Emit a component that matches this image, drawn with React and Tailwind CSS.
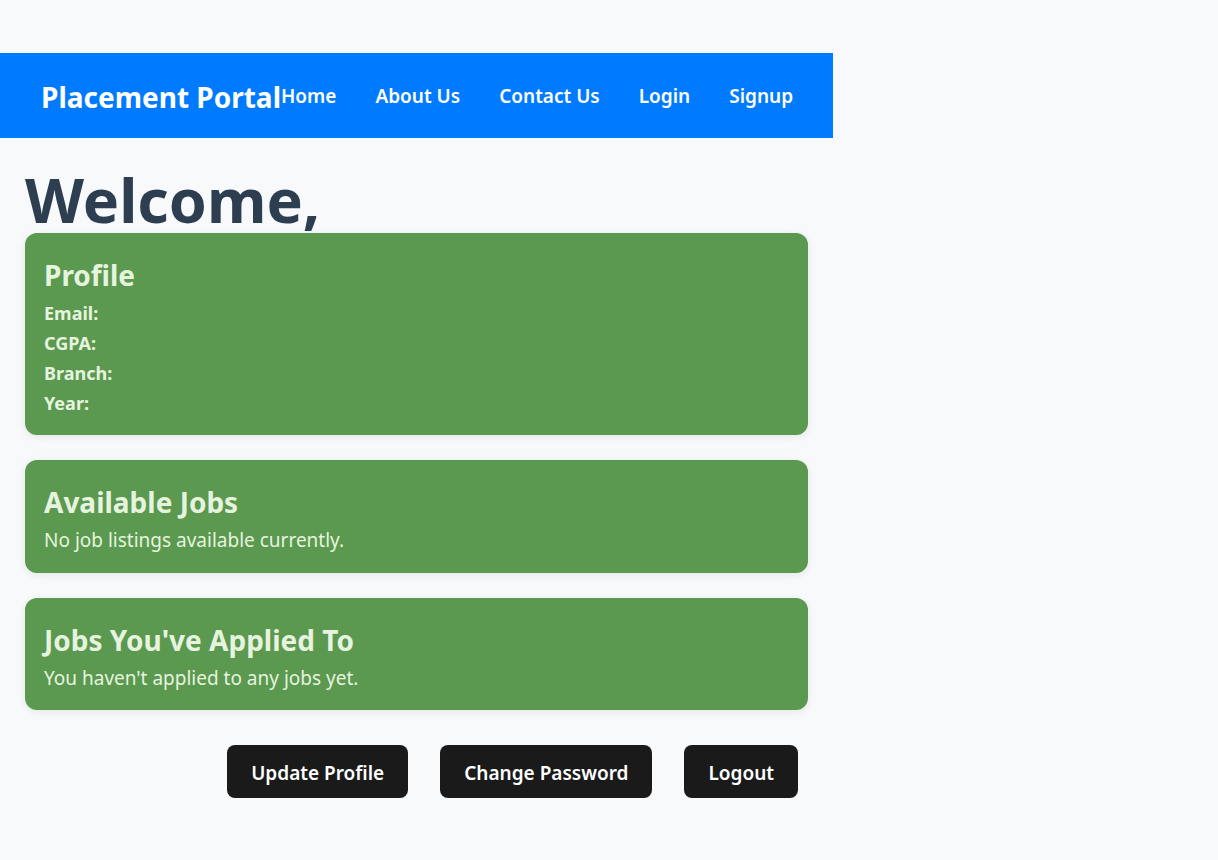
import React from 'react';

const Card = ({ title, children }) => (
  <div className="rounded-xl bg-[#5b9850] px-[19px] pt-[22px] pb-[17px] text-[#e6f4df] shadow-[0_2px_8px_rgba(0,0,0,0.08)]">
    <h2 className="mb-[3px] text-[28px] font-bold leading-[40px]">{title}</h2>
    {children}
  </div>
);

export default function App() {
  return (
    <div className="min-h-[860px] bg-[#f8f9fa] pt-[53px] font-['Noto_Sans',sans-serif]">
      <div className="w-[833px]">
        {/* Navbar */}
        <nav className="flex h-[85px] items-center bg-[#007bff] px-[41px] pt-[2px] text-white whitespace-nowrap">
          <span className="shrink-0 text-[28px] font-bold">Placement Portal</span>
          <div className="flex items-center gap-[39px] text-[19px] font-semibold">
            <a>Home</a>
            <a>About Us</a>
            <a>Contact Us</a>
            <a>Login</a>
            <a>Signup</a>
          </div>
        </nav>

        <div className="px-[25px]">
          <h1 className="mt-[28px] text-[61px] font-bold leading-[67px] text-[#2c3e50]">Welcome,</h1>

          <div className="flex flex-col gap-[25px]">
            <Card title="Profile">
              <div className="text-[18px] font-bold leading-[30px]">
                <p>Email:</p>
                <p>CGPA:</p>
                <p>Branch:</p>
                <p>Year:</p>
              </div>
            </Card>
            <Card title="Available Jobs">
              <p className="text-[19px] leading-[31px]">No job listings available currently.</p>
            </Card>
            <Card title="Jobs You've Applied To">
              <p className="text-[19px] leading-[30px]">You haven't applied to any jobs yet.</p>
            </Card>
          </div>

          <div className="mt-[35px] flex justify-end gap-[32px] pr-[10px]">
            <button className="h-[53px] rounded-lg bg-[#1a1a1a] px-[24px] pt-[3px] text-[19px] font-semibold text-white">Update Profile</button>
            <button className="h-[53px] rounded-lg bg-[#1a1a1a] px-[24px] pt-[3px] text-[19px] font-semibold text-white">Change Password</button>
            <button className="h-[53px] rounded-lg bg-[#1a1a1a] px-[24px] pt-[3px] text-[19px] font-semibold text-white">Logout</button>
          </div>
        </div>
      </div>
    </div>
  );
}
